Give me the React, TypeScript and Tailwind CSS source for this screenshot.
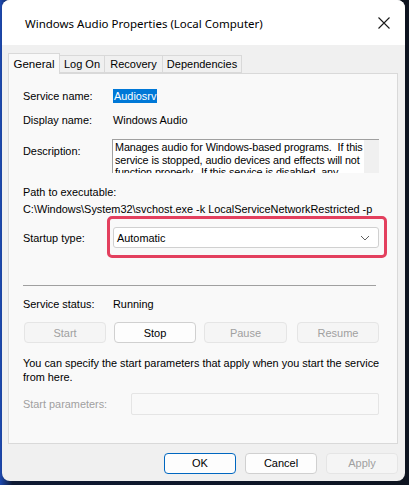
import React from "react";

const body = { fontFamily: '"Liberation Sans", Arial, sans-serif' } as React.CSSProperties;

function Btn({ label, disabled, primary, w }: { label: string; disabled?: boolean; primary?: boolean; w: string }) {
  return (
    <div
      className={
        "flex h-[21px] items-center justify-center rounded-[4px] border text-[11px] " +
        w +
        " " +
        (disabled
          ? "border-[#e5e5e5] bg-[#f5f5f5] text-[#a0a0a0]"
          : primary
          ? "border-[#0067c0] bg-[#fdfdfd] text-black"
          : "border-[#d0d0d0] bg-[#fdfdfd] text-black")
      }
    >
      {label}
    </div>
  );
}

export default function App() {
  return (
    <div className="h-[485px] w-[409px] bg-[linear-gradient(90deg,#1d49b0_0%,#0f1a33_3%,#0e1420_100%)] pl-[2px]" style={body}>
      <div className="flex h-[481px] w-[403px] flex-col overflow-hidden rounded-[8px] bg-[#f0f0f0]">
        {/* title bar */}
        <div className="flex h-[45px] items-center justify-between bg-white pl-[23px] pr-[14px] pt-[2px]">
          <span className="text-[11.5px] text-black" style={{ fontFamily: '"Noto Sans", "Open Sans", sans-serif' }}>
            Windows Audio Properties (Local Computer)
          </span>
          <svg width="14" height="14" viewBox="0 0 14 14" className="mb-[1px]">
            <path d="M1.5 1.5 L12.5 12.5 M12.5 1.5 L1.5 12.5" stroke="#1a1a1a" strokeWidth="1.1" fill="none" />
          </svg>
        </div>

        {/* tabs */}
        <div className="flex pl-[6px] pt-[8px]">
          <div className="z-10 -mb-px flex h-[21px] w-[52px] items-center justify-center border border-b-0 border-[#d9d9d9] bg-[#f9f9f9] pt-[1px] text-[11.5px]">
            General
          </div>
          <div className="mt-[2px] flex h-[18px] w-[45px] items-center justify-center border-y border-r border-[#d9d9d9] text-[11px]">Log On</div>
          <div className="mt-[2px] flex h-[18px] w-[58px] items-center justify-center border-y border-r border-[#d9d9d9] text-[11px]">Recovery</div>
          <div className="mt-[2px] flex h-[18px] w-[79px] items-center justify-center border-y border-r border-[#d9d9d9] text-[11px]">Dependencies</div>
        </div>

        {/* panel */}
        <div className="ml-[6px] flex h-[371px] w-[390px] flex-col border border-[#d9d9d9] bg-[#f9f9f9] pl-[14px] pt-[15px] text-[10.9px] leading-[14px] text-black">
          <div className="flex">
            <span className="w-[90px]">Service name:</span>
            <span className="bg-[#0078d7] px-[1px] text-white">Audiosrv</span>
          </div>
          <div className="mt-[10px] flex">
            <span className="w-[90px]">Display name:</span>
            <span>Windows Audio</span>
          </div>
          <div className="mt-[12px] flex items-start">
            <span className="w-[89px] pt-[5px]">Description:</span>
            <div className="flex h-[34px] w-[267px] overflow-hidden border-l border-t border-[#a0a0a0] bg-white">
              <div className="w-[251px] shrink-0 pl-[2px] pt-[1px] text-[10.8px] leading-[12.5px] tracking-[-0.1px]">
                Manages audio for Windows-based programs.&nbsp; If this service is stopped, audio devices and effects will not function properly.&nbsp; If this service is disabled, any services that explicitly depend on it will fail to start
              </div>
              <div className="flex-1 bg-[#f0f0f0]" />
            </div>
          </div>
          <div className="mt-[12px]">Path to executable:</div>
          <div className="mt-[3px]">C:\Windows\System32\svchost.exe -k LocalServiceNetworkRestricted -p</div>
          <div className="mt-[11px] flex items-center">
            <span className="w-[90px]">Startup type:</span>
            <div className="relative">
              <div className="flex h-[21px] w-[266px] items-center justify-between rounded-[3px] border border-[#d0d0d0] bg-white pl-[3px] pr-[8px]">
                <span>Automatic</span>
                <svg width="10" height="6" viewBox="0 0 10 6">
                  <path d="M1 1 L5 5 L9 1" stroke="#606060" strokeWidth="1" fill="none" />
                </svg>
              </div>
              <div className="absolute left-[-6px] top-[-11px] h-[42px] w-[280px] rounded-[5px] border-[3px] border-[#e3405e]" />
            </div>
          </div>
          <div className="mt-[37px] h-px w-[353px] bg-[#a0a0a0]" />
          <div className="mt-[11px] flex">
            <span className="w-[90px]">Service status:</span>
            <span>Running</span>
          </div>
          <div className="mt-[11px] flex">
            <Btn label="Start" disabled w="w-[82px] ml-[1px]" />
            <Btn label="Stop" w="w-[82px] ml-[8px]" />
            <Btn label="Pause" disabled w="w-[83px] ml-[8px]" />
            <Btn label="Resume" disabled w="w-[82px] ml-[10px]" />
          </div>
          <div className="mt-[13px] w-[360px]">
            You can specify the start parameters that apply when you start the service from here.
          </div>
          <div className="mt-[9px] flex items-center">
            <span className="w-[108px] text-[#a0a0a0]">Start parameters:</span>
            <div className="h-[22px] w-[248px] rounded-[2px] border border-[#e5e5e5] bg-[#f9f9f9]" />
          </div>
        </div>

        {/* footer */}
        <div className="mt-[9px] flex justify-end gap-[9px] pr-[7px]">
          <Btn label="OK" primary w="w-[72px]" />
          <Btn label="Cancel" w="w-[72px]" />
          <Btn label="Apply" disabled w="w-[72px]" />
        </div>
      </div>
    </div>
  );
}
